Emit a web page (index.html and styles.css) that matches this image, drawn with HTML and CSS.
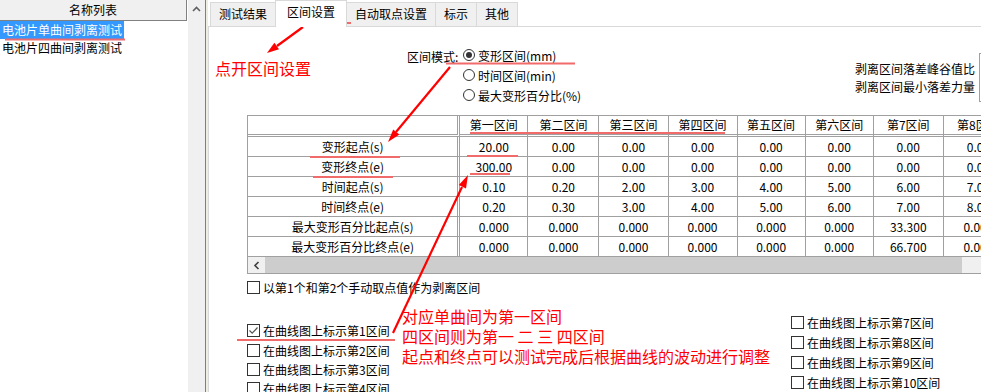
FILE: index.html
```html
<!DOCTYPE html>
<html lang="zh-CN">
<head>
<meta charset="UTF-8">
<title>区间设置</title>
<link rel="stylesheet" href="styles.css">
</head>
<body>
<div class="app">
    <aside class="sidebar">
        <div class="list">
            <div class="list-head">名称列表</div>
            <div class="item selected"><span>电池片单曲间剥离测试</span></div>
            <div class="item"><span>电池片四曲间剥离测试</span></div>
        </div>
        <div class="vscroll">
            <svg width="17" height="17" viewBox="0 0 17 17"><polyline points="5,11 8.5,7.5 12,11" fill="none" stroke="#606060" stroke-width="1.6"/></svg>
        </div>
    </aside>
    <div class="split"></div>
    <main class="main">
        <nav class="tabs">
            <div class="tab">测试结果</div>
            <div class="tab active">区间设置</div>
            <div class="tab">自动取点设置</div>
            <div class="tab">标示</div>
            <div class="tab">其他</div>
        </nav>
        <section class="page">
            <div class="top">
                <div class="mode">
                    <span class="mode-label">区间模式:</span>
                    <div class="radios">
                        <div class="radio on"><i></i>变形区间(mm)</div>
                        <div class="radio"><i></i>时间区间(min)</div>
                        <div class="radio"><i></i>最大变形百分比(%)</div>
                    </div>
                </div>
                <div class="ratios">
                    <div class="ratio-labels">
                        <span>剥离区间落差峰谷值比</span>
                        <span>剥离区间最小落差力量</span>
                    </div>
                    <div class="ratio-box"></div>
                </div>
            </div>

            <div class="grid">
                <table>
                    <tr>
                        <th class="name"></th>
                        <th>第一区间</th><th>第二区间</th><th>第三区间</th><th>第四区间</th>
                        <th>第五区间</th><th>第六区间</th><th>第7区间</th><th>第8区间</th>
                    </tr>
                    <tr>
                        <td class="name">变形起点(s)</td>
                        <td>20.00</td><td>0.00</td><td>0.00</td><td>0.00</td><td>0.00</td><td>0.00</td><td>0.00</td><td>0.00</td>
                    </tr>
                    <tr>
                        <td class="name">变形终点(e)</td>
                        <td>300.00</td><td>0.00</td><td>0.00</td><td>0.00</td><td>0.00</td><td>0.00</td><td>0.00</td><td>0.00</td>
                    </tr>
                    <tr>
                        <td class="name">时间起点(s)</td>
                        <td>0.10</td><td>0.20</td><td>2.00</td><td>3.00</td><td>4.00</td><td>5.00</td><td>6.00</td><td>7.00</td>
                    </tr>
                    <tr>
                        <td class="name">时间终点(e)</td>
                        <td>0.20</td><td>0.30</td><td>3.00</td><td>4.00</td><td>5.00</td><td>6.00</td><td>7.00</td><td>8.00</td>
                    </tr>
                    <tr>
                        <td class="name">最大变形百分比起点(s)</td>
                        <td>0.000</td><td>0.000</td><td>0.000</td><td>0.000</td><td>0.000</td><td>0.000</td><td>33.300</td><td>0.000</td>
                    </tr>
                    <tr>
                        <td class="name">最大变形百分比终点(e)</td>
                        <td>0.000</td><td>0.000</td><td>0.000</td><td>0.000</td><td>0.000</td><td>0.000</td><td>66.700</td><td>0.000</td>
                    </tr>
                </table>
                <div class="hscroll">
                    <span class="hbtn"><svg width="8" height="9" viewBox="0 0 8 9"><polyline points="5.5,1 2,4.5 5.5,8" fill="none" stroke="#404040" stroke-width="1.6"/></svg></span>
                    <span class="thumb"></span>
                </div>
            </div>

            <div class="check manual"><i></i>以第1个和第2个手动取点值作为剥离区间</div>

            <div class="marks">
                <div class="mark-col left">
                    <div class="check on"><i><svg width="11" height="11" viewBox="0 0 11 11"><polyline points="1.5,5.5 4.2,8.2 9.5,2.5" fill="none" stroke="#555" stroke-width="1.2"/></svg></i>在曲线图上标示第1区间</div>
                    <div class="check"><i></i>在曲线图上标示第2区间</div>
                    <div class="check"><i></i>在曲线图上标示第3区间</div>
                    <div class="check"><i></i>在曲线图上标示第4区间</div>
                    <div class="check"><i></i>在曲线图上标示第5区间</div>
                </div>
                <div class="mark-col right">
                    <div class="check"><i></i>在曲线图上标示第7区间</div>
                    <div class="check"><i></i>在曲线图上标示第8区间</div>
                    <div class="check"><i></i>在曲线图上标示第9区间</div>
                    <div class="check"><i></i>在曲线图上标示第10区间</div>
                </div>
            </div>
        </section>
    </main>

    <!-- red markup drawn over the window -->
    <div class="notes">
        <svg class="marks-svg" width="981" height="392" viewBox="0 0 981 392">
            <g class="underline">
                <line x1="5" y1="39.5" x2="125" y2="39.5"/>
                <line x1="281" y1="23" x2="351" y2="23"/>
                <line x1="446" y1="63.5" x2="575" y2="63.5"/>
                <line x1="470" y1="133" x2="725" y2="133"/>
                <line x1="310" y1="157" x2="400" y2="157"/>
                <line x1="467" y1="156" x2="518" y2="156"/>
                <line x1="313" y1="177" x2="393" y2="177"/>
                <line x1="470" y1="174" x2="510" y2="174"/>
                <line x1="237" y1="340" x2="395" y2="340"/>
            </g>
            <g class="arrow">
                <line x1="303" y1="27" x2="277" y2="46"/>
                <polygon points="267,53 274.4,42.8 279,49.2"/>
                <line x1="450" y1="67" x2="396" y2="132"/>
                <polygon points="388,142 393.2,129.5 399.4,134.5"/>
                <line x1="393" y1="333" x2="462" y2="187"/>
                <polygon points="468,175 466,188.4 458.8,185"/>
            </g>
        </svg>
        <div class="note note-tab">点开区间设置</div>
        <div class="note note-main">对应单曲间为第一区间<br>四区间则为第一 二 三 四区间<br>起点和终点可以测试完成后根据曲线的波动进行调整</div>
    </div>
</div>
</body>
</html>
```

FILE: styles.css
```css
/* Basic styling */
* {
    box-sizing: border-box;
}
body {
    margin: 0;
    font-family: "Noto Sans CJK SC", "Microsoft YaHei", sans-serif;
    font-size: 12px;
    color: #000;
    background: #fff;
}
.app {
    position: relative;
    display: flex;
    width: 981px;
    height: 392px;
    overflow: hidden;
}

/* left list */
.sidebar {
    flex-shrink: 0;
    width: 206px;
    display: flex;
    border-right: 1px solid #808080;
}
.list {
    flex: 1;
    background: #fff;
}
.list-head {
    width: 187px;
    height: 21px;
    line-height: 20px;
    text-align: center;
    background: #f0f0f0;
    border-right: 1px solid #808080;
    border-bottom: 1px solid #808080;
}
.item {
    height: 18px;
    line-height: 18px;
    white-space: nowrap;
}
.item span {
    display: inline-block;
    padding: 0 2px;
}
.item.selected span {
    background: #3399ff;
    color: #fff;
}
.vscroll {
    width: 17px;
    background: #f0f0f0;
}
.vscroll svg {
    display: block;
}
.split {
    flex-shrink: 0;
    width: 2px;
    background: #efece1;
}

/* tabs */
.main {
    flex: 1;
    min-width: 0;
    display: flex;
    flex-direction: column;
    overflow: hidden;
}
.tabs {
    height: 26px;
    display: flex;
    align-items: flex-end;
    padding-left: 2px;
}
.tab {
    height: 24px;
    line-height: 21px;
    padding: 0 8px;
    background: #f0f0f0;
    border: 1px solid #d9d9d9;
    border-bottom: none;
    margin-right: -1px;
    white-space: nowrap;
}
.tab.active {
    position: relative;
    z-index: 1;
    height: 27px;
    line-height: 22px;
    padding: 0 11px;
    margin-bottom: -1px;
    background: #fff;
}

/* page */
.page {
    flex: 1;
    border-top: 1px solid #d9d9d9;
    border-left: 1px solid #d9d9d9;
    padding-left: 38px;
}
.top {
    height: 88px;
    display: flex;
}
.mode {
    display: flex;
    margin-left: 160px;
    margin-top: 18px;
}
.mode-label {
    width: 56px;
    line-height: 20px;
    padding-top: 2px;
}
.radio {
    display: flex;
    align-items: center;
    height: 20px;
    white-space: nowrap;
}
.radio i {
    position: relative;
    width: 12px;
    height: 12px;
    margin-right: 3px;
    border: 1px solid #333;
    border-radius: 50%;
    background: #fff;
}
.radio.on i::after {
    content: "";
    position: absolute;
    left: 2px;
    top: 2px;
    width: 6px;
    height: 6px;
    border-radius: 50%;
    background: #333;
}
.ratios {
    display: flex;
    gap: 4px;
    margin-left: auto;
    margin-right: -62px;
    margin-top: 26px;
}
.ratio-labels {
    display: flex;
    flex-direction: column;
    align-items: flex-end;
    padding-top: 7px;
    line-height: 18px;
}
.ratio-box {
    width: 64px;
    height: 49px;
    border: 1px solid #a0a0a0;
    background: #fff;
}

/* interval grid */
.grid {
    width: 780px;
    border: 1px solid #a0a0a0;
    border-right: none;
}
.grid table {
    width: 766px;
    table-layout: fixed;
    border-collapse: separate;
    border-spacing: 0;
}
.grid th,
.grid td {
    padding: 0;
    width: 69px;
    text-align: center;
    font-weight: normal;
    white-space: nowrap;
    overflow: hidden;
    line-height: 19px;
    border-right: 1px solid #a0a0a0;
    border-bottom: 1px solid #a0a0a0;
}
.grid th {
    line-height: 18px;
    border-bottom: 3px double #a0a0a0;
}
.grid .name {
    width: 212px;
    border-right: 3px double #a0a0a0;
}
.grid th:nth-child(2) { width: 68px; }
.grid th:nth-child(3) { width: 71px; }
.grid th:nth-child(6),
.grid th:nth-child(7) { width: 68px; }
.grid th:nth-child(8),
.grid th:nth-child(9) { width: 70px; }
.hscroll {
    display: flex;
    height: 16px;
    background: #f0f0f0;
}
.hbtn {
    width: 17px;
    display: flex;
    align-items: center;
    justify-content: center;
}
.thumb {
    width: 697px;
    background: #cdcdcd;
}

/* checkboxes */
.check {
    display: flex;
    align-items: center;
    height: 20px;
    white-space: nowrap;
}
.check i {
    display: flex;
    align-items: center;
    justify-content: center;
    width: 13px;
    height: 13px;
    margin-right: 3px;
    border: 1px solid #333;
    background: #fff;
}
.manual {
    margin-top: 3px;
}
.marks {
    display: flex;
}
.mark-col.left {
    width: 544px;
    margin-top: 24px;
}
.mark-col.left .check {
    height: 19.4px;
}
.mark-col.right {
    margin-top: 15px;
}

/* red markup */
.notes {
    position: absolute;
    inset: 0;
    pointer-events: none;
}
.marks-svg {
    position: absolute;
    left: 0;
    top: 0;
}
.underline line {
    stroke: #f26b6b;
    stroke-width: 2;
}
.arrow line {
    stroke: #ff0000;
    stroke-width: 2.2;
}
.arrow polygon {
    fill: #ff0000;
}
.note {
    position: absolute;
    color: #ff0000;
    font-size: 16px;
    line-height: 20px;
    white-space: nowrap;
}
.note-tab {
    left: 215px;
    top: 58px;
}
.note-main {
    left: 402px;
    top: 306px;
}
```
